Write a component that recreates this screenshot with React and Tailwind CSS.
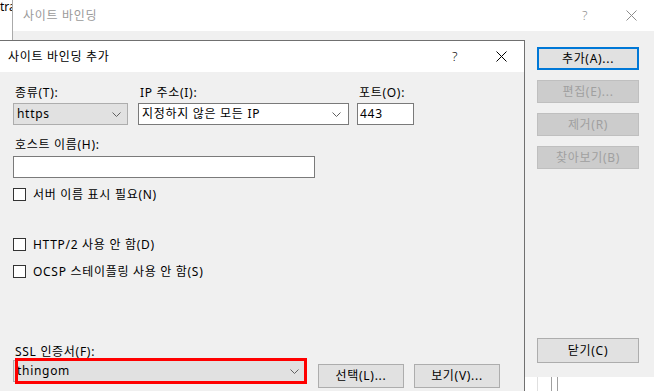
import React from 'react';

const font = "font-['Noto_Sans','Noto_Sans_CJK_KR',sans-serif] tracking-[0.7px]";

// Small chevron used in the combo boxes
const Chevron = () => (
  <svg width="9" height="5" viewBox="0 0 9 5" className="shrink-0">
    <polyline points="0.5,0.5 4.5,4.5 8.5,0.5" fill="none" stroke="#606060" strokeWidth="1" />
  </svg>
);

const CloseGlyph = ({ color }) => (
  <svg width="11" height="11" viewBox="0 0 11 11">
    <path d="M0.5 0.5 L10.5 10.5 M10.5 0.5 L0.5 10.5" stroke={color} strokeWidth="1" />
  </svg>
);

const TitleBar = ({ title, dim }) => (
  <div className="flex h-[31px] items-center bg-white">
    <span className={`flex-1 text-[12px] leading-[16px] ${dim ? 'pl-[10px] text-[#9a9a9a]' : 'pl-[8px] text-black'}`}>
      {title}
    </span>
    <span className={`flex w-[46px] justify-center text-[13px] font-light ${dim ? 'text-[#8c8c8c]' : 'text-black'}`}>?</span>
    <span className="flex w-[46px] justify-center">
      <CloseGlyph color={dim ? '#8c8c8c' : '#000'} />
    </span>
  </div>
);

const SideButton = ({ label, focused, disabled, className = '' }) => (
  <div
    className={`flex h-[23px] w-[102px] items-center justify-center text-[12px] ${
      focused
        ? 'border-2 border-[#0078d7] bg-[#e1e1e1] text-black'
        : disabled
        ? 'border border-[#bfbfbf] bg-[#cccccc] text-[#a0a0a0]'
        : 'border border-[#adadad] bg-[#e1e1e1] text-black'
    } ${className}`}
  >
    {label}
  </div>
);

const Checkbox = ({ label, className = '' }) => (
  <div className={`flex h-[13px] items-center ${className}`}>
    <div className="h-[13px] w-[13px] shrink-0 border border-[#333] bg-white" />
    <span className="ml-[7px] text-[12px] leading-[16px] text-black">{label}</span>
  </div>
);

const Label = ({ children, className = '' }) => (
  <div className={`h-[16px] pl-[2px] text-[12px] leading-[16px] text-black ${className}`}>{children}</div>
);

export default function App() {
  return (
    <div className={`relative h-[391px] w-[654px] overflow-hidden bg-white ${font}`}>
      {/* window behind everything */}
      <div className="absolute left-0 top-0 w-[12px] overflow-hidden text-[12px] leading-[14px] tracking-normal text-black">tra</div>
      <div className="absolute left-[525px] top-[377px] flex h-[14px] w-[129px] bg-white">
        <div className="ml-[12px] h-full w-px bg-[#e0e0e0]" />
        <div className="ml-[13px] h-full w-px bg-[#a0a0a0]" />
        <div className="ml-[5px] h-full w-px bg-[#a0a0a0]" />
      </div>

      {/* 사이트 바인딩 window */}
      <div className="absolute left-[12px] top-0 flex h-[377px] w-[642px] flex-col border-l border-[#aaaaaa] bg-[#f0f0f0]">
        <TitleBar title="사이트 바인딩" dim />
        <div className="flex flex-1 flex-col items-end pb-[14px] pr-[15px] pt-[16px]">
          <SideButton label="추가(A)..." focused />
          <SideButton label="편집(E)..." disabled className="mt-[10px]" />
          <SideButton label="제거(R)" disabled className="mt-[10px]" />
          <SideButton label="찾아보기(B)" disabled className="mt-[10px]" />
          <SideButton label="닫기(C)" className="mt-auto h-[25px]" />
        </div>
      </div>

      {/* 사이트 바인딩 추가 dialog */}
      <div className="absolute left-0 top-[40px] h-[360px] w-[525px] border-r border-t border-[#707070] bg-[#f0f0f0]">
        <TitleBar title="사이트 바인딩 추가" />
        <div className="flex flex-col pl-[13px] pt-[13px]">
          <div className="flex">
            <div className="w-[115px]">
              <Label className="mb-[2px]">종류(T):</Label>
              <div className="flex h-[22px] items-center justify-between border border-[#adadad] bg-[#e1e1e1] pl-[3px] pr-[6px] text-[12px] text-black">
                <span>https</span>
                <Chevron />
              </div>
            </div>
            <div className="ml-[10px] w-[211px]">
              <Label className="mb-[2px]">IP 주소(I):</Label>
              <div className="flex h-[22px] items-center justify-between border border-[#7a7a7a] bg-white pl-[3px] pr-[7px] text-[12px] text-black">
                <span>지정하지 않은 모든 IP</span>
                <Chevron />
              </div>
            </div>
            <div className="ml-[8px] w-[57px]">
              <Label className="mb-[2px]">포트(O):</Label>
              <div className="flex h-[22px] items-center border border-[#7a7a7a] bg-white pl-[2px] text-[12px] text-black">
                443
              </div>
            </div>
          </div>

          <Label className="mt-[12px] mb-[3px]">호스트 이름(H):</Label>
          <div className="h-[22px] w-[302px] border border-[#7a7a7a] bg-white" />

          <Checkbox label="서버 이름 표시 필요(N)" className="mt-[10px]" />
          <Checkbox label="HTTP/2 사용 안 함(D)" className="mt-[37px]" />
          <Checkbox label="OCSP 스테이플링 사용 안 함(S)" className="mt-[14px]" />

          <Label className="mt-[66px]">SSL 인증서(F):</Label>
          <div className="flex items-start">
            <div className="relative flex h-[22px] w-[293px] items-center justify-between border border-[#adadad] bg-[#e1e1e1] pl-[3px] pr-[6px] text-[12px] text-black">
              <span>thingom</span>
              <Chevron />
              <div className="absolute -bottom-[3px] -right-[2px] -top-[3px] left-[1px] border-[3px] border-[#ff0000]" />
            </div>
            <div className="ml-[12px] mt-[4px] flex h-[24px] w-[86px] items-center justify-center border border-[#adadad] bg-[#e1e1e1] text-[12px] text-black">
              선택(L)...
            </div>
            <div className="ml-[10px] mt-[4px] flex h-[24px] w-[86px] items-center justify-center border border-[#adadad] bg-[#e1e1e1] text-[12px] text-black">
              보기(V)...
            </div>
          </div>
        </div>
      </div>
    </div>
  );
}
